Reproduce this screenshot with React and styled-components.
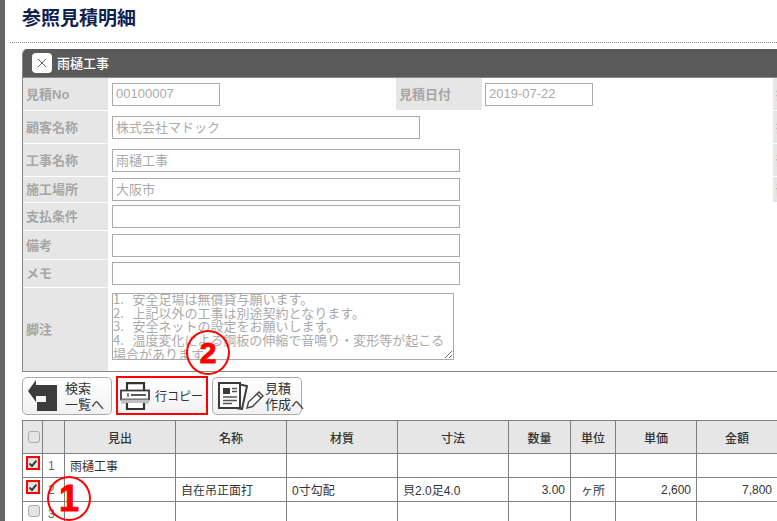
import React, { useEffect, useRef } from "react";
import styled, { createGlobalStyle } from "styled-components";

const FONT = `"Liberation Sans", "Noto Sans CJK JP", sans-serif`;

const Global = createGlobalStyle`
  html, body { margin: 0; padding: 0; background: #fff; overflow: hidden; }
  body { font-family: ${FONT}; }
  * { box-sizing: border-box; }
`;

const Page = styled.div`
  position: relative; display: flex; width: 777px; height: 521px; overflow: hidden; background: #fff;
`;
const SideBar = styled.div`flex: 0 0 5px; background: #666;`;
const Main = styled.div`flex: 1; min-width: 0; overflow: hidden;`;
const TitleBar = styled.div`
  margin-left: 5px; height: 43px; padding-left: 12px; border-bottom: 1px dotted #888;
`;
const Title = styled.h1`
  margin: 0; font-size: 19px; font-weight: 700; line-height: 37px; color: #10204f;
`;
const Content = styled.div`padding-left: 17px; padding-top: 6px;`;
const Panel = styled.section`border-left: 1px solid #888; border-bottom: 1px solid #888; overflow: hidden; border-top-left-radius: 5px;`;
const PanelHead = styled.header`
  display: flex; align-items: center; gap: 5px; height: 29px; padding-left: 10px; margin-left: -1px;
  background: #5a5a5a; border-bottom: 1px solid #8a8a8a; color: #fff; font-size: 13px; font-weight: 500;
`;
const PanelTitle = styled.span`padding-bottom: 1px;`;
const CloseBtn = styled.span`
  display: flex; align-items: center; justify-content: center; width: 20px; height: 20px; background: #fff; border-radius: 4px;
`;
const FormGrid = styled.div`
  display: grid; width: 860px; row-gap: 1px;
  grid-template-columns: 85px 288px 86px 291px 85px;
  grid-template-rows: 32px 32px 32px 25px 27px 28px 27px 83px;
`;
const Label = styled.div`
  display: flex; align-items: center; grid-column: ${(p) => p.$col || 1}; padding: 0 0 2px 3px;
  background: ${(p) => (p.$blank ? "transparent" : "#e6e6e6")}; color: #a6a6a6; font-size: 13px; font-weight: 700; overflow: hidden; white-space: nowrap;
`;
const Field = styled.div`
  display: flex; align-items: ${(p) => (p.$top ? "flex-start" : "center")}; grid-column: ${(p) => p.$col || 2} / span ${(p) => p.$span || 1};
  padding-left: ${(p) => p.$pad || 4}px; padding-top: ${(p) => (p.$top ? 5 : 0)}px;
`;
const TextBox = styled.input`
  width: ${(p) => p.$w}px; height: 23px; padding: 0 3px 2px 3px; border: 1px solid #aaa; border-radius: 0; outline: none;
  background: #fff; color: #aaa; font: 13px ${FONT};
`;
const NoteBox = styled.textarea`
  display: block; width: 342px; height: 67px; padding: 0; border: 1px solid #aaa; border-radius: 0; outline: none; overflow: hidden;
  background: #fff; color: #aaa; font: 13px/13.7px "Noto Sans CJK JP", sans-serif; resize: both; white-space: pre-wrap;
`;
const Toolbar = styled.div`display: flex; align-items: center; gap: 4px; height: 48px;`;
const ToolBtn = styled.button`
  display: flex; align-items: center; gap: ${(p) => p.$gap ?? 2}px; width: ${(p) => p.$w}px; height: ${(p) => (p.$marked ? 39 : 38)}px;
  padding: 0 0 0 ${(p) => p.$pl}px; margin-top: ${(p) => (p.$marked ? -1 : 0)}px;
  background: linear-gradient(#fff, #f1f1f1); color: #333; font: 13px/16px ${FONT}; text-align: left;
  border: ${(p) => (p.$marked ? "2px solid #f00" : "1px solid #aaa")}; border-radius: ${(p) => (p.$marked ? 0 : 5)}px;
`;
const BtnLines = styled.div`padding-top: 1px;`;
const BtnText = styled.span`display: block; white-space: nowrap; font-size: ${(p) => p.$size || 13}px; padding-top: ${(p) => p.$pt || 0}px;`;
const Grid = styled.table`
  table-layout: fixed; width: 756px; border-collapse: collapse; font-size: 12px; color: #333;
`;
const Head = styled.th`
  height: 33px; padding: 0; background: #e6e6e6; border: 1px solid #808080; font-weight: 500; font-size: 12px; color: #333; text-align: center;
`;
const Cell = styled.td`
  height: 24px; padding: 0 5px; border: 1px solid #808080; text-align: ${(p) => p.$align || "left"};
  white-space: nowrap; overflow: hidden; color: ${(p) => p.$color || "#333"};
`;
const CheckCell = styled.td`height: 24px; padding: 2px 0 0; border: 1px solid #808080; vertical-align: top;`;
const CheckHead = styled(Head)`padding: 0;`;
const CheckFrame = styled.span`
  display: block; width: 14px; height: 14px; margin-left: 3px;
  border: 2px solid ${(p) => (p.$marked ? "#f00" : "transparent")};
`;
const CheckBox = styled.span`
  display: flex; align-items: center; justify-content: center; width: ${(p) => (p.$marked ? 10 : 12)}px; height: ${(p) => (p.$marked ? 10 : 12)}px;
  margin: ${(p) => (p.$marked ? 0 : "-1px 0 0 0")}; background: #e4e4e4; border: 1px solid ${(p) => (p.$marked ? "#ddd" : "#aaa")}; border-radius: ${(p) => (p.$marked ? 0 : 3)}px;
`;
const Callout = styled.div`
  position: absolute; left: ${(p) => p.$x - 22}px; top: ${(p) => p.$y - 22}px; width: 44px; height: 45px;
  display: flex; align-items: center; justify-content: center; border: 2px solid #f00; border-radius: 50%;
  color: #f00; font: 900 ${(p) => p.$size}px/1 "Liberation Sans", sans-serif; -webkit-text-stroke: 1px #f00;
`;

const Check = () => (
  <svg width="10" height="9" viewBox="0 0 10 9"><path d="M0.5 4.5 L3.7 7.6 L9.2 1" fill="none" stroke="#3c3c3c" strokeWidth="2.6" /></svg>
);
const Box = ({ checked, marked }) => (
  <CheckFrame $marked={marked}>
    <CheckBox $marked={marked}>{checked && <Check />}</CheckBox>
  </CheckFrame>
);

const BackIcon = () => (
  <svg width="30" height="32" viewBox="28 382 30 32" style={{ flex: "none" }}>
    <path fill="#3c3c3c" d="M28 393 L36 382 V387 H57 V413 H37 V404 H46 V398 H36 V404 Z" />
  </svg>
);
const PrinterIcon = () => (
  <svg width="30" height="28" viewBox="0 0 30 28" style={{ flex: "none" }}>
    <path d="M7 9V1.2H24V9" fill="#fff" stroke="#333" strokeWidth="2.2" />
    <rect x="1" y="8.5" width="28" height="9" fill="#fff" stroke="#3c3c3c" strokeWidth="1.8" />
    <rect x="1" y="17.5" width="28" height="4" fill="#c0c0c0" />
    <path d="M7 21V27H24V21" fill="#fff" stroke="#333" strokeWidth="2.2" />
    <path d="M11 13H26" stroke="#333" strokeWidth="1.6" />
    <path d="M8 11V15" stroke="#555" strokeWidth="1.4" />
  </svg>
);
const EstimateIcon = () => (
  <svg width="46" height="28" viewBox="0 0 46 28" style={{ flex: "none" }}>
    <path d="M22 2.5 L29 4 L24 27 L11 25" fill="#fff" stroke="#3c3c3c" strokeWidth="2" />
    <rect x="1" y="1" width="21" height="25" fill="#fff" stroke="#3c3c3c" strokeWidth="2" />
    <rect x="5" y="6" width="7" height="6" fill="#3c3c3c" />
    <path d="M14 6.5H19M14 9.5H19M5 15H19M5 18.5H19M5 21.5H14" stroke="#555" strokeWidth="1.3" />
    <path d="M29 26 L30.5 20 L41 10 L45 14 L34.5 24.5 Z" fill="#fff" stroke="#444" strokeWidth="1.4" />
    <path d="M39 12 L43 16" stroke="#444" strokeWidth="1.2" />
  </svg>
);

const note = `1.   安全足場は無償貸与願います。
2.   上記以外の工事は別途契約となります。
3.   安全ネットの設定をお願いします。
4.   温度変化による鋼板の伸縮で音鳴り・変形等が起こる場合があります。`;

const headers = ["見出", "名称", "材質", "寸法", "数量", "単位", "単価", "金額"];
const widths = [20, 22, 111, 111, 111, 111, 62, 45, 81, 81];
const rows = [
  { n: 1, checked: true, marked: true, title: "雨樋工事", c: [] },
  { n: 2, checked: true, marked: true, title: "", c: ["自在吊正面打", "0寸勾配", "貝2.0足4.0", "3.00", "ヶ所", "2,600", "7,800"] },
  { n: 3, c: [] },
];
const aligns = [undefined, undefined, undefined, "right", "center", "right", "right"];

export default function App() {
  const noteRef = useRef(null);
  useEffect(() => {
    if (noteRef.current) noteRef.current.scrollTop = 2;
  }, []);
  return (
    <Page>
      <Global />
      <SideBar />
      <Main>
        <TitleBar><Title>参照見積明細</Title></TitleBar>
        <Content>
          <Panel>
            <PanelHead>
              <CloseBtn>
                <svg width="10" height="10" viewBox="0 0 10 10"><path d="M1 1L9 9M9 1L1 9" stroke="#666" strokeWidth="1" /></svg>
              </CloseBtn>
              <PanelTitle>雨樋工事</PanelTitle>
            </PanelHead>
            <FormGrid>
              <Label>見積No</Label>
              <Field><TextBox $w={108} readOnly value="00100007" /></Field>
              <Label $col={3}>見積日付</Label>
              <Field $col={4} $pad={3}><TextBox $w={108} readOnly value="2019-07-22" /></Field>
              <Label $col={5}>担当者</Label>

              <Label>顧客名称</Label>
              <Field $span={3}><TextBox $w={308} readOnly value="株式会社マドック" /></Field>
              <Label $col={5}>担当者</Label>

              <Label>工事名称</Label>
              <Field $span={3}><TextBox $w={348} readOnly value="雨樋工事" /></Field>
              <Label $col={5}>部門名</Label>

              <Label>施工場所</Label>
              <Field $span={3}><TextBox $w={348} readOnly value="大阪市" /></Field>
              <Label $col={5}>部門名</Label>

              <Label>支払条件</Label>
              <Field $span={3}><TextBox $w={348} readOnly value="" /></Field>
              <Label $col={5} $blank />

              <Label>備考</Label>
              <Field $span={3}><TextBox $w={348} readOnly value="" /></Field>
              <Label $col={5} $blank />

              <Label>メモ</Label>
              <Field $span={3}><TextBox $w={348} readOnly value="" /></Field>
              <Label $col={5} $blank />

              <Label>脚注</Label>
              <Field $span={3} $top><NoteBox ref={noteRef} readOnly value={note} /></Field>
            </FormGrid>
          </Panel>
          <Toolbar>
            <ToolBtn $w={90} $pl={5} $gap={7}>
              <BackIcon />
              <BtnLines><BtnText>検索</BtnText><BtnText>一覧へ</BtnText></BtnLines>
            </ToolBtn>
            <ToolBtn $w={92} $pl={2} $gap={5} $marked>
              <PrinterIcon />
              <BtnText $size={12} $pt={2}>行コピー</BtnText>
            </ToolBtn>
            <ToolBtn $w={90} $pl={5} $gap={1}>
              <EstimateIcon />
              <BtnLines><BtnText>見積</BtnText><BtnText>作成へ</BtnText></BtnLines>
            </ToolBtn>
          </Toolbar>
          <Grid>
            <colgroup>{widths.map((w, i) => <col key={i} style={{ width: w }} />)}</colgroup>
            <thead>
              <tr>
                <CheckHead><Box /></CheckHead>
                <Head />
                {headers.map((h) => <Head key={h}>{h}</Head>)}
              </tr>
            </thead>
            <tbody>
              {rows.map((r) => (
                <tr key={r.n}>
                  <CheckCell><Box checked={r.checked} marked={r.marked} /></CheckCell>
                  <Cell $color="#666">{r.n}</Cell>
                  <Cell>{r.title}</Cell>
                  {aligns.map((a, i) => <Cell key={i} $align={a}>{r.c[i] || ""}</Cell>)}
                </tr>
              ))}
            </tbody>
          </Grid>
        </Content>
      </Main>
      <Callout $x={69} $y={498} $size={36}>1</Callout>
      <Callout $x={208} $y={352} $size={30}>2</Callout>
    </Page>
  );
}
